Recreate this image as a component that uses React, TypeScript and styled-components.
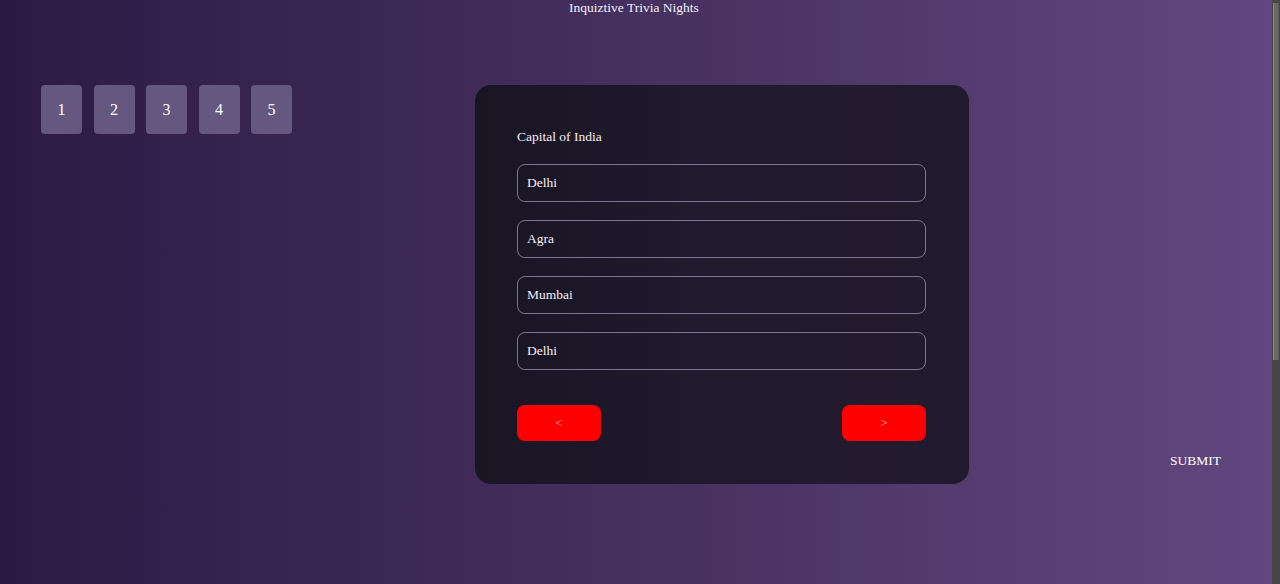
import React from "react";
import styled, { createGlobalStyle } from "styled-components";

const Global = createGlobalStyle`
  html, body { margin: 0; padding: 0; overflow: hidden; }
  body {
    font-family: "Liberation Serif", "Times New Roman", serif;
    color: #ffffff;
  }
`;

const Frame = styled.div`
  display: flex;
  height: 584px;
`;

const Page = styled.div`
  flex: 1;
  display: flex;
  flex-direction: column;
  background: linear-gradient(to right, #2c1a45 0%, #46305f 50%, #61477f 100%);
`;

const ScrollRail = styled.div`
  width: 8px;
  background: #484444;
  display: flex;
  flex-direction: column;
  align-items: center;
`;

const ScrollThumb = styled.div`
  width: 6px;
  height: 357px;
  margin-top: 3px;
  box-sizing: border-box;
  background: #6b6865;
  border-left: 1px solid #8a8683;
  border-right: 1px solid #5c5957;
`;

const Title = styled.h1`
  margin: 0;
  padding-right: 4px;
  font-size: 13.5px;
  font-weight: normal;
  text-align: center;
  line-height: 16px;
  color: #f4eef8;
`;

const Main = styled.div`
  display: flex;
  align-items: flex-start;
  margin-top: 69px;
  padding-left: 41px;
`;

const Numbers = styled.div`
  display: flex;
  gap: 11.5px;
`;

const NumButton = styled.button`
  width: 41px;
  height: 49px;
  border: none;
  border-radius: 4px;
  background: #655780;
  color: #fff;
  font-family: inherit;
  font-size: 16px;
  padding: 0;
`;

const Card = styled.div`
  margin-left: 183px;
  width: 494px;
  height: 399px;
  box-sizing: border-box;
  padding: 44px 43px 0 42px;
  border-radius: 16px;
  background: linear-gradient(to right, #1a1523 0%, #1f1a2d 45%, #231a2e 80%, #201a2c 100%);
  display: flex;
  flex-direction: column;
`;

const Question = styled.div`
  font-size: 13.5px;
  line-height: 16px;
  color: #f3eef6;
  margin-bottom: 19px;
`;

const Options = styled.div`
  display: flex;
  flex-direction: column;
  gap: 18px;
`;

const Option = styled.div`
  height: 38px;
  box-sizing: border-box;
  border: 1px solid #7d7490;
  border-radius: 8px;
  padding: 0 9px;
  display: flex;
  align-items: center;
  font-size: 13.5px;
  color: #f3eef6;
`;

const NavRow = styled.div`
  display: flex;
  justify-content: space-between;
  margin-top: 35px;
`;

const NavButton = styled.button`
  width: 84px;
  height: 36px;
  border: none;
  border-radius: 8px;
  background: #ff0000;
  color: #ffb3b3;
  font-family: inherit;
  font-size: 13px;
  padding: 0;
`;

const Submit = styled.button`
  align-self: flex-start;
  margin-top: 368px;
  margin-left: 201px;
  background: none;
  border: none;
  padding: 0;
  color: #ffffff;
  font-family: inherit;
  font-size: 13.5px;
  line-height: 16px;
`;

const options = ["Delhi", "Agra", "Mumbai", "Delhi"];

export default function App() {
  return (
    <>
      <Global />
      <Frame>
        <Page>
          <Title>Inquiztive Trivia Nights</Title>
          <Main>
            <Numbers>
              {[1, 2, 3, 4, 5].map((n) => (
                <NumButton key={n}>{n}</NumButton>
              ))}
            </Numbers>
            <Card>
              <Question>Capital of India</Question>
              <Options>
                {options.map((o, i) => (
                  <Option key={i}>{o}</Option>
                ))}
              </Options>
              <NavRow>
                <NavButton>&lt;</NavButton>
                <NavButton>&gt;</NavButton>
              </NavRow>
            </Card>
            <Submit>SUBMIT</Submit>
          </Main>
        </Page>
        <ScrollRail>
          <ScrollThumb />
        </ScrollRail>
      </Frame>
    </>
  );
}
